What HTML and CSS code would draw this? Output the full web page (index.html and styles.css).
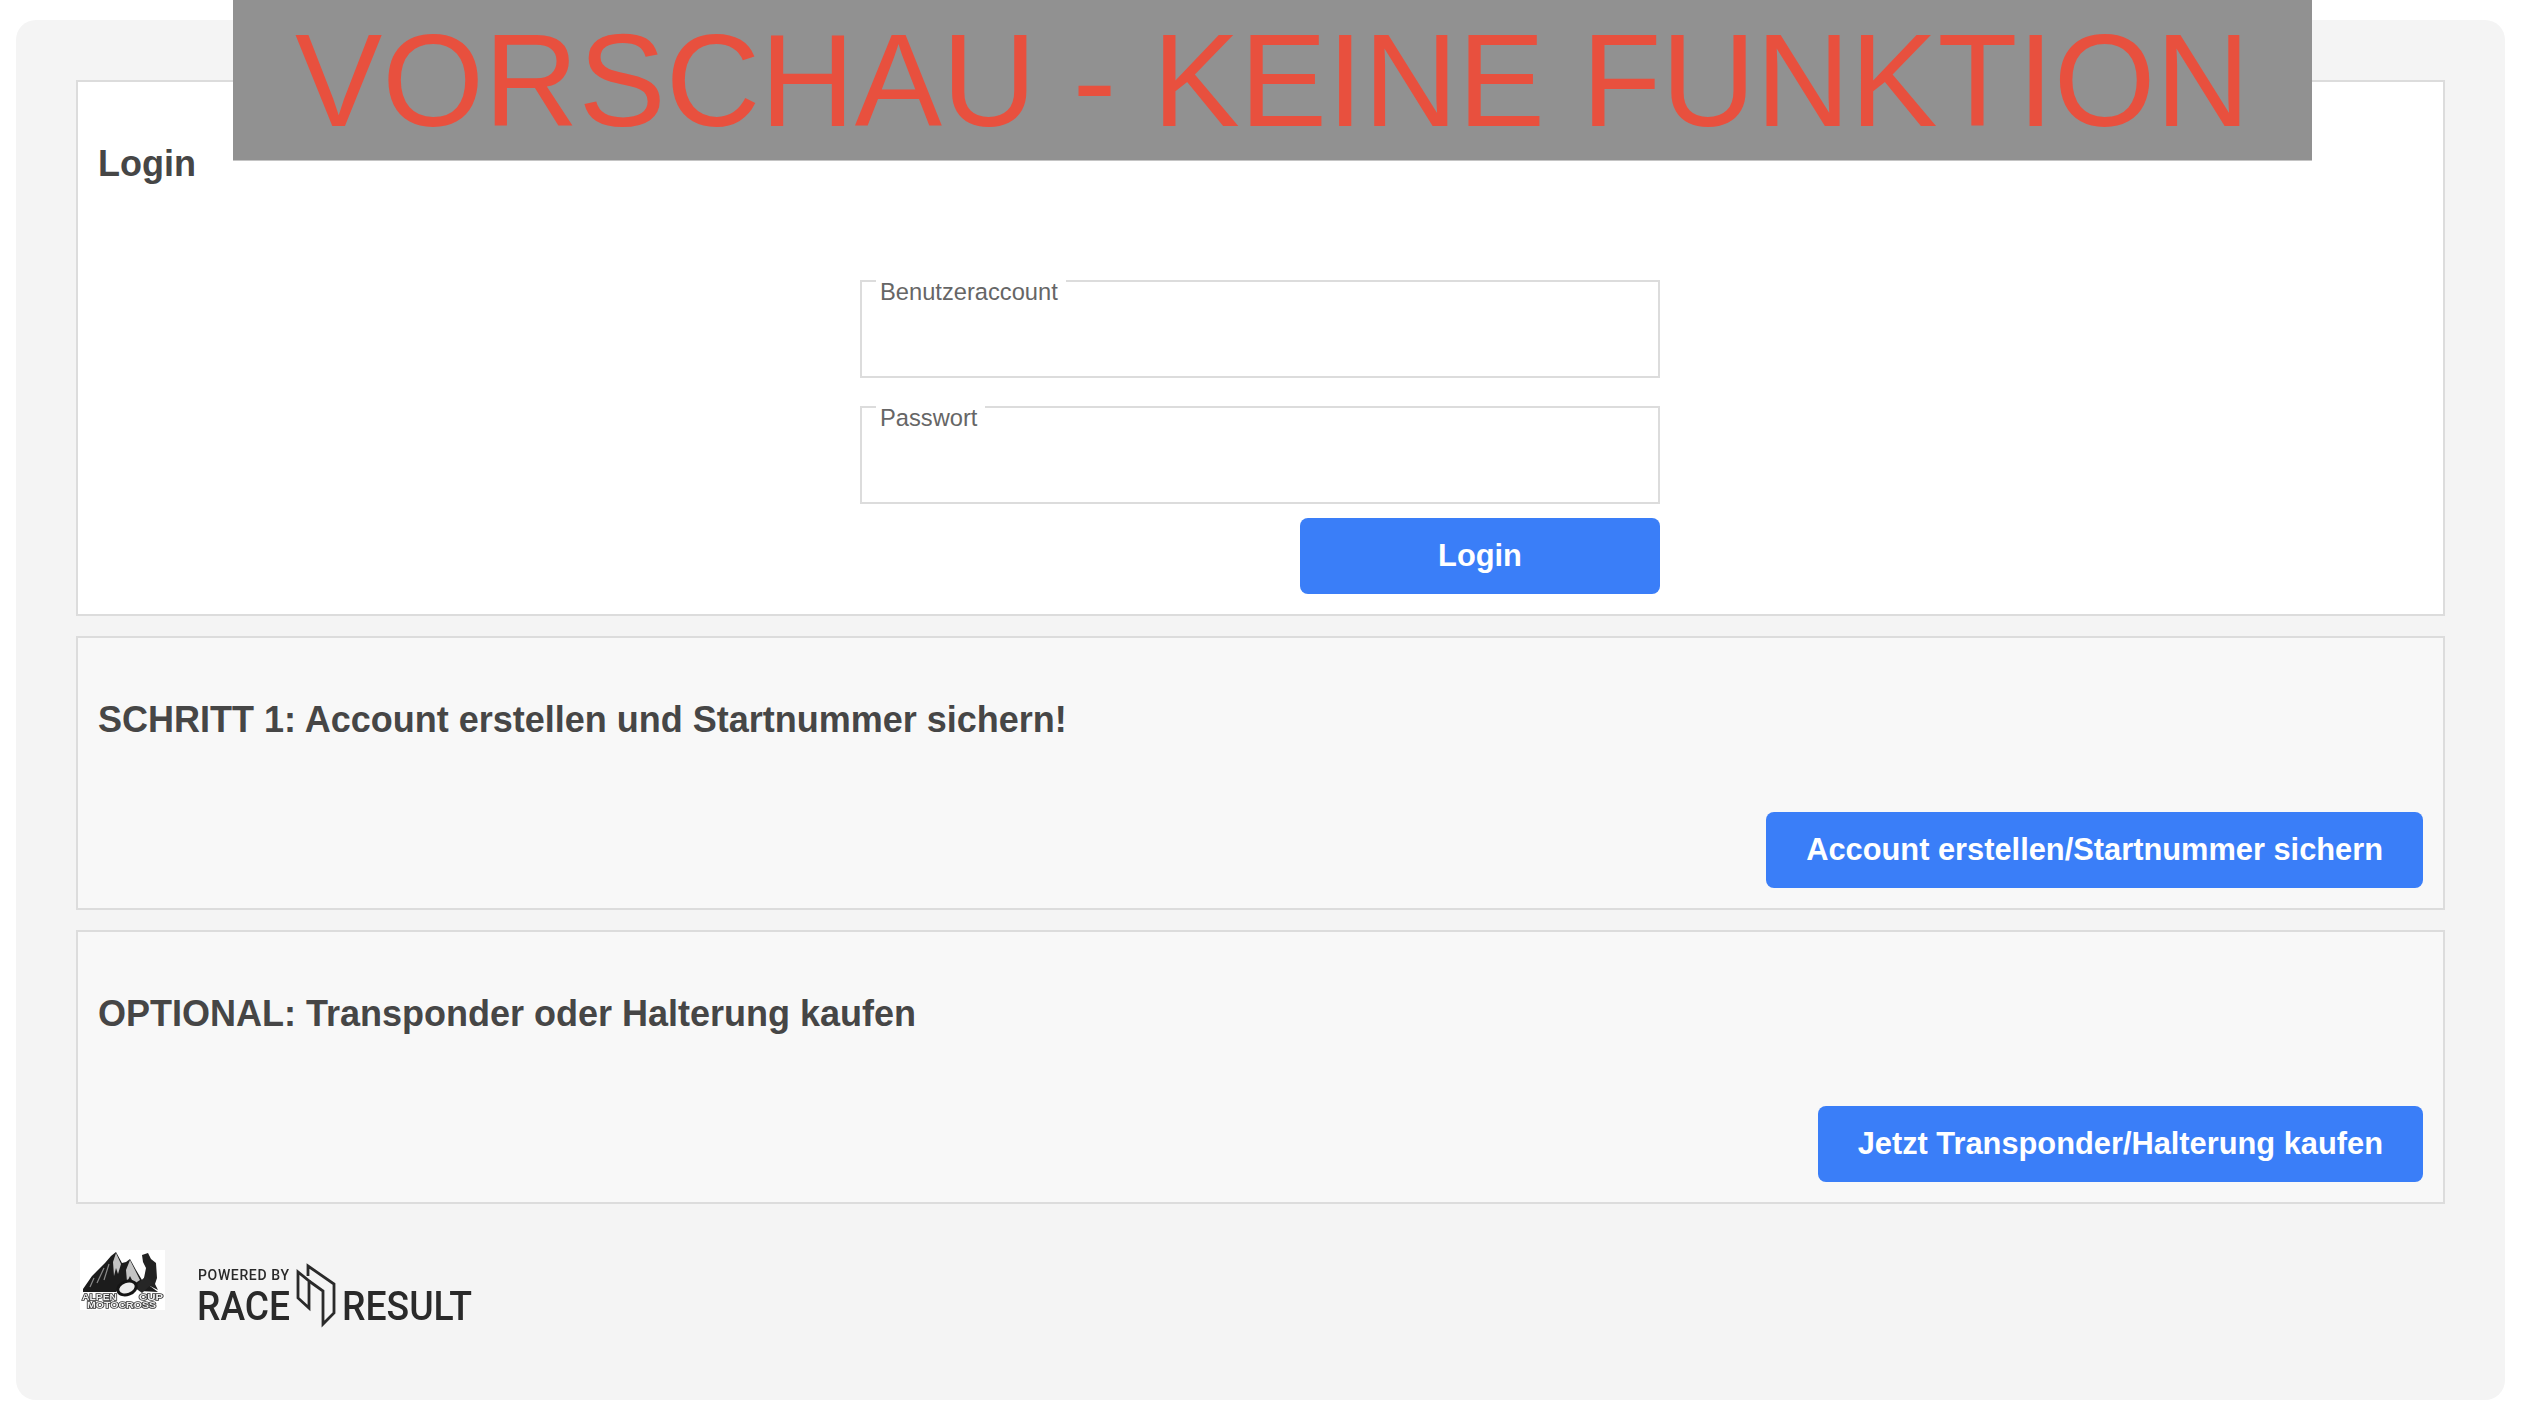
FILE: index.html
```html
<!DOCTYPE html>
<html lang="de">
<head>
<meta charset="utf-8">
<title>Login</title>
<link rel="stylesheet" href="styles.css">
</head>
<body>
<div class="banner">VORSCHAU - KEINE FUNKTION</div>
<main class="shell">
  <section class="panel panel-login">
    <h2 class="panel-title">Login</h2>
    <form class="login-form">
      <div class="field"><span class="field-label">Benutzeraccount</span><input class="field-input" type="text"></div>
      <div class="field"><span class="field-label">Passwort</span><input class="field-input" type="password"></div>
      <div class="actions"><button class="btn btn-login" type="button">Login</button></div>
    </form>
  </section>
  <section class="panel panel-muted">
    <h2 class="panel-title">SCHRITT 1: Account erstellen und Startnummer sichern!</h2>
    <div class="actions"><button class="btn" type="button">Account erstellen/Startnummer sichern</button></div>
  </section>
  <section class="panel panel-muted">
    <h2 class="panel-title">OPTIONAL: Transponder oder Halterung kaufen</h2>
    <div class="actions"><button class="btn" type="button">Jetzt Transponder/Halterung kaufen</button></div>
  </section>
  <footer class="footer">
    <svg class="logo-cup" viewBox="0 0 85 60" width="85" height="60" role="img" aria-label="Alpen Cup Motocross">
      <rect width="85" height="60" fill="#fff"/>
      <path d="M3 39 L12 26 L17 21 L25 13 L31 6 L36 2 L42 13 L46 12 L50 9 L56 20 L62 30 L70 36 L78 42 L60 41 L50 33 L40 37 L36 42 L3 42 Z" fill="#1c1c1c"/>
      <path d="M36 3 L41 14 L38 24 L36 18 L34 26 L33 12 Z M50 10 L55 20 L60 30 L54 34 L50 26 L47 32 L46 20 Z" fill="#c4c4c4"/>
      <path d="M24 18 L17 33 M29 14 L24 30 M14 28 L10 37" fill="none" stroke="#8a8a8a" stroke-width="1.2"/>
      <path d="M62 5 L68 3 L71 9 L76 13 L77 28 L75 34 L78 40 L70 36 L64 28 L66 18 L63 12 Z" fill="#222"/>
      <path d="M54 37 L66 26 L73 33 L62 43 Z" fill="#262626"/>
      <ellipse cx="47" cy="38" rx="9.5" ry="6.5" fill="#eee" stroke="#151515" stroke-width="3" transform="rotate(-20 47 38)"/>
      <text class="cup-text" x="2" y="49.5" textLength="35" lengthAdjust="spacingAndGlyphs">ALPEN</text>
      <text class="cup-text" x="59" y="49.5" textLength="24" lengthAdjust="spacingAndGlyphs">CUP</text>
      <text class="cup-text" x="7" y="58" textLength="69" lengthAdjust="spacingAndGlyphs">MOTOCROSS</text>
    </svg>
    <svg class="logo-rr" viewBox="0 0 280 68" width="280" height="68" role="img" aria-label="Powered by Race Result">
      <text class="rr-small" x="-1" y="18" textLength="91" lengthAdjust="spacing">POWERED BY</text>
      <text class="rr-big" x="-2" y="58" textLength="93" lengthAdjust="spacingAndGlyphs">RACE</text>
      <text class="rr-big" x="143" y="58" textLength="130" lengthAdjust="spacingAndGlyphs">RESULT</text>
      <path d="M99 10 L99 36 L110 46 L110 19 Z" fill="none" stroke="#2a2a2a" stroke-width="2.8"/>
      <path d="M109 14 L109 4 L135 22 L135 51 L124 62 L124 29 L110 19" fill="none" stroke="#2a2a2a" stroke-width="2.8"/>
    </svg>
  </footer>
</main>
</body>
</html>
```
FILE: styles.css
```css
* { box-sizing: border-box; }
html, body { margin: 0; padding: 0; background: #fff; }
body {
  height: 1424px;
  padding: 20px 35px 24px 16px;
  font-family: "Liberation Sans", Arial, sans-serif;
  color: #444;
}
.banner {
  position: absolute;
  top: 0;
  left: 233px;
  width: 2079px;
  height: 161px;
  background: #919191;
  border-bottom: 1px solid #c4c4c4;
  color: #e8503e;
  font-size: 130.8px;
  line-height: 163px;
  text-align: center;
  white-space: nowrap;
}
.shell {
  height: 1380px;
  padding: 60px;
  background: #f4f4f4;
  border-radius: 20px;
  display: flex;
  flex-direction: column;
  gap: 20px;
}
.panel {
  border: 2px solid #dcdcdc;
  padding: 20px;
  display: flex;
  flex-direction: column;
}
.panel-login { background: #fff; height: 536px; }
.panel-muted { background: #f8f8f8; height: 274px; }
.panel-title {
  margin: 40px 0 0;
  font-size: 36px;
  line-height: 44px;
  font-weight: 700;
  color: #464646;
}
.panel-muted .actions { margin-top: auto; }
.login-form {
  width: 800px;
  margin: 94px 0 0 762px;
  display: flex;
  flex-direction: column;
}
.field {
  position: relative;
  height: 98px;
  margin-bottom: 28px;
  border: 2px solid #dcdcdc;
  background: #fff;
}
.field:nth-child(2) { margin-bottom: 14px; }
.field-label {
  position: absolute;
  top: -2px;
  left: 14px;
  padding: 0 8px 0 4px;
  background: #fff;
  font-size: 23.7px;
  line-height: 24px;
  color: #666;
}
.field-input {
  display: block;
  width: 100%;
  height: 100%;
  border: 0;
  background: transparent;
  outline: 0;
}
.actions { display: flex; justify-content: flex-end; }
.btn {
  height: 76px;
  padding: 0 40px;
  border: 0;
  border-radius: 8px;
  background: #3a7ef8;
  color: #fff;
  font-family: inherit;
  font-size: 30.8px;
  font-weight: 700;
}
.btn-login { width: 360px; }
.footer {
  display: flex;
  align-items: flex-start;
  gap: 34px;
  margin-top: 26px;
  padding-left: 4px;
}
.logo-cup { display: block; flex: none; filter: blur(0.5px); }
.logo-rr { display: block; flex: none; margin-top: 12px; overflow: visible; filter: blur(0.3px); }
.cup-text {
  font-family: "Liberation Sans", Arial, sans-serif;
  font-size: 8.5px;
  font-weight: 700;
  fill: #eee;
  stroke: #333;
  stroke-width: 1.4px;
  paint-order: stroke;
}
.rr-small {
  font-family: Roboto, "Liberation Sans", sans-serif;
  font-size: 14px;
  font-weight: 500;
  fill: #2a2a2a;
}
.rr-big {
  font-family: Roboto, "Liberation Sans", sans-serif;
  font-size: 41px;
  font-weight: 500;
  fill: #2a2a2a;
}
```
